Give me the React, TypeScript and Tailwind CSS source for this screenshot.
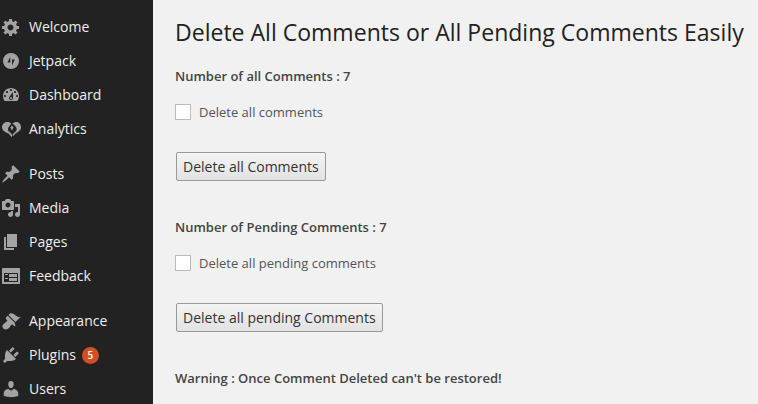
import React from "react";

const Dash = ({ d }: { d: string }) => (
  <svg viewBox="0 0 20 20" className="w-5 h-5 fill-[#a3a3a3] shrink-0" fillRule="evenodd">
    <path d={d} />
  </svg>
);

const icons = {
  gear: "M18 12h-2.18c-.17.7-.44 1.35-.81 1.93l1.54 1.54-2.1 2.1-1.54-1.54c-.58.36-1.23.63-1.91.79V19H8v-2.18c-.68-.16-1.33-.43-1.91-.79l-1.54 1.54-2.12-2.12 1.54-1.54c-.36-.58-.63-1.23-.79-1.91H1V9.03h2.17c.16-.7.44-1.35.8-1.94L2.43 5.55l2.1-2.1 1.54 1.54c.58-.37 1.24-.64 1.93-.81V2h3v2.18c.68.16 1.33.43 1.91.79l1.54-1.54 2.12 2.12-1.54 1.54c.36.59.64 1.24.8 1.94H18V12zm-8.5 1.5c1.66 0 3-1.34 3-3s-1.34-3-3-3-3 1.34-3 3 1.34 3 3 3z",
  jetpack: "M10 2a8 8 0 1 0 0 16a8 8 0 0 0 0-16zM9.3 6v5.6H6.4zM11 14.5V8.4h2.8z",
  dashboard: "M3.76 16h12.48c1.1-1.37 1.76-3.11 1.76-5 0-4.42-3.58-8-8-8s-8 3.58-8 8c0 1.89.66 3.63 1.76 5zM10 4c.55 0 1 .45 1 1s-.45 1-1 1-1-.45-1-1 .45-1 1-1zM6 6c.55 0 1 .45 1 1s-.45 1-1 1-1-.45-1-1 .45-1 1-1zm8 0c.55 0 1 .45 1 1s-.45 1-1 1-1-.45-1-1 .45-1 1-1zm-5.37 5.55L12 7v6c0 1.1-.9 2-2 2s-2-.9-2-2c0-.57.24-1.08.63-1.45zM4 10c.55 0 1 .45 1 1s-.45 1-1 1-1-.45-1-1 .45-1 1-1zm12 0c.55 0 1 .45 1 1s-.45 1-1 1-1-.45-1-1 .45-1 1-1zm-5 3c0-.55-.45-1-1-1s-1 .45-1 1 .45 1 1 1 1-.45 1-1z",
  analytics: "M1 8.5C1 5 3.5 3 6.5 3c1.5 0 2.8.6 3.8 1.5L8.5 7C7.5 8 7 9 7 10.2c0 1.4 1 2.6 2.4 3.2l2.2 3-1.2 1.6-2.8-3.6C4 13.5 1 11 1 8.5zM11.5 4.5c1-.9 2.2-1.5 3.6-1.5 2.9 0 4.9 2 4.9 5.5 0 2.6-3 5-5.6 5.9L12.6 17l-1-1.4 2-2.3c1.2-.6 2-1.8 2-3.1 0-1.2-.5-2.2-1.4-3.2zM10.9 6.5l1.6 2-1.6 3-1.6-3z",
  pin: "M10.44 3.02l1.82-1.82 6.36 6.35-1.83 1.82c-1.05-.68-2.48-.57-3.41.36l-.75.75c-.92.93-1.04 2.35-.35 3.41l-1.83 1.82-2.41-2.41-2.8 2.79c-.42.42-3.38 2.71-3.8 2.29s1.86-3.39 2.28-3.81l2.79-2.79L4.1 9.36l1.83-1.82c1.05.69 2.48.57 3.4-.36l.75-.75c.93-.92 1.05-2.35.36-3.41z",
  media: "M13 11V4c0-.55-.45-1-1-1h-1.67L9 1H5L3.67 3H2c-.55 0-1 .45-1 1v7c0 .55.45 1 1 1h10c.55 0 1-.45 1-1zM7 4.5c1.38 0 2.5 1.12 2.5 2.5S8.38 9.5 7 9.5 4.5 8.38 4.5 7 5.62 4.5 7 4.5zM14 6h5v10.5c0 1.38-1.12 2.5-2.5 2.5S14 17.88 14 16.5s1.12-2.5 2.5-2.5c.17 0 .34.02.5.05V9h-3V6zm-4 8.05V13h2v3.5c0 1.38-1.12 2.5-2.5 2.5S7 17.88 7 16.5 8.12 14 9.5 14c.17 0 .34.02.5.05z",
  page: "M6 15V2h10v13H6zm-1 1h8v2H3V5h2v11z",
  feedback: "M2 2h16c.55 0 1 .45 1 1v14c0 .55-.45 1-1 1H2c-.55 0-1-.45-1-1V3c0-.55.45-1 1-1zm15 14V7H3v9h14zM4 8v1h3V8H4zm4 0v3h8V8H8zm-4 4v1h3v-1H4zm4 0v3h8v-3H8z",
  brush: "M14.48 11.06L7.41 3.99l1.5-1.5c.5-.56 2.3-.47 3.51.32 1.21.8 1.43 1.28 2.91 2.1 1.18.64 2.45 1.26 4.45.85zm-.71.71L6.7 4.7 4.93 6.47c-.39.39-.39 1.02 0 1.41l1.06 1.06c.39.39.39 1.03 0 1.42-.6.6-1.43 1.11-2.21 1.69-.35.26-.7.53-1.01.84C1.43 13.23.78 15.82 2.4 17.44c1.62 1.62 4.21.98 5.53-.35.31-.31.58-.66.85-1.02.57-.78 1.08-1.6 1.69-2.2.39-.39 1.02-.39 1.41 0l1.06 1.06c.39.39 1.02.39 1.41 0z",
  plug: "M13.11 4.36L9.87 7.6 8 5.73l3.24-3.24c.35-.34 1.05-.2 1.56.32.52.51.66 1.21.31 1.55zm-8 1.77l.91-1.12 9.01 9.01-1.19.84c-.71.71-2.63 1.16-3.82 1.16H6.14L4.9 17.26c-.59.59-1.54.59-2.12 0-.59-.58-.59-1.53 0-2.12l1.24-1.24v-3.88c0-1.13.4-3.19 1.09-3.89zm7.26 3.97l3.24-3.24c.34-.35 1.04-.21 1.55.31.52.51.66 1.21.31 1.55l-3.24 3.25z",
  user: "M10 9.25c-2.27 0-2.73-3.44-2.73-3.44C7 4.02 7.82 2 9.97 2c2.16 0 2.98 2.02 2.71 3.81 0 0-.41 3.44-2.68 3.44zm0 2.57L12.72 10c2.39 0 4.52 2.33 4.52 4.53v2.49s-3.65 1.13-7.24 1.13c-3.65 0-7.24-1.13-7.24-1.13v-2.49c0-2.25 1.94-4.48 4.47-4.48z",
};

const groups = [
  [
    { name: "Welcome", icon: icons.gear },
    { name: "Jetpack", icon: icons.jetpack },
    { name: "Dashboard", icon: icons.dashboard },
    { name: "Analytics", icon: icons.analytics },
  ],
  [
    { name: "Posts", icon: icons.pin },
    { name: "Media", icon: icons.media },
    { name: "Pages", icon: icons.page },
    { name: "Feedback", icon: icons.feedback },
  ],
  [
    { name: "Appearance", icon: icons.brush },
    { name: "Plugins", icon: icons.plug, badge: 5 },
    { name: "Users", icon: icons.user },
  ],
];

const Section = ({ title, check, button }: { title: string; check: string; button: string }) => (
  <div>
    <p className="text-[13px] leading-[18px] font-semibold">{title}</p>
    <label className="flex items-center gap-2 mt-[19px] text-[13px] leading-4 text-[#555]">
      <span className="w-4 h-4 bg-white border border-[#bbb]"></span>
      {check}
    </label>
    <button className="block ml-px mt-8 h-[29px] px-[6px] text-sm text-[#333] border border-[#999] rounded-[2px] bg-gradient-to-b from-[#f4f4f4] to-[#e2e2e2]">
      {button}
    </button>
  </div>
);

export default function App() {
  return (
    <div className="flex h-[404px] w-[758px] overflow-hidden bg-[#f1f1f1] font-['Open_Sans',sans-serif] text-[#444]">
      <div className="w-[153px] shrink-0 bg-[#222] pt-[10px] flex flex-col gap-[11px]">
        {groups.map((group, i) => (
          <div key={i}>
            {group.map((item) => (
              <div key={item.name} className="h-[34px] flex items-center pl-px gap-2 text-sm text-[#eee]">
                <Dash d={item.icon} />
                <span>{item.name}</span>
                {item.badge && (
                  <span className="w-[17px] h-[17px] rounded-full bg-[#d54e21] text-white text-[10px] font-semibold flex items-center justify-center -ml-[2px]">
                    {item.badge}
                  </span>
                )}
              </div>
            ))}
          </div>
        ))}
      </div>
      <div className="flex-1 pl-[22px] pt-[16px]">
        <h1 className="text-[23.04px] leading-[33px] text-[#222] whitespace-nowrap">
          Delete All Comments or All Pending Comments Easily
        </h1>
        <div className="mt-[18px] flex flex-col gap-[37px]">
          <Section title="Number of all Comments : 7" check="Delete all comments" button="Delete all Comments" />
          <Section title="Number of Pending Comments : 7" check="Delete all pending comments" button="Delete all pending Comments" />
        </div>
        <p className="mt-[37px] text-[13px] leading-[18px] font-semibold">Warning : Once Comment Deleted can't be restored!</p>
      </div>
    </div>
  );
}
